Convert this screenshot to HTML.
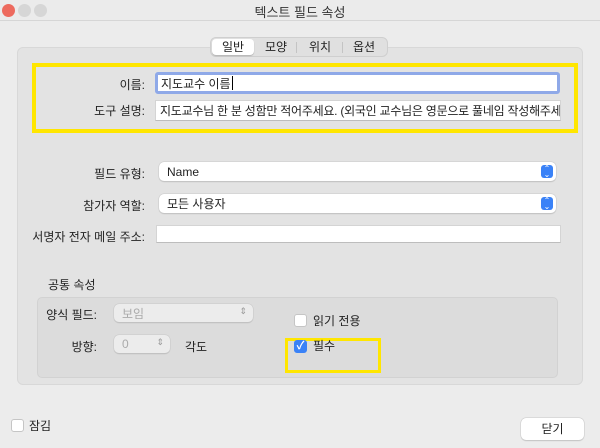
<!DOCTYPE html>
<html><head><meta charset="utf-8"><style>
*{box-sizing:border-box;margin:0;padding:0}
body{width:600px;height:448px;background:#ececec;font-family:"Liberation Sans","Noto Sans CJK KR",sans-serif;font-size:12px;color:#222;position:relative;overflow:hidden}
.a{position:absolute}
.lbl{position:absolute;text-align:right;font-size:12px;color:#222}
.field{position:absolute;background:#fff;border:1px solid #d4d4d4;border-bottom-color:#bdbdbd;font-size:12px;padding-left:4px;display:flex;align-items:center}
.pop{position:absolute;background:#fff;border-radius:5px;box-shadow:0 0 0 .5px #c8c8c8,0 1px 1px rgba(0,0,0,.2);font-size:12px;padding-left:8px;display:flex;align-items:center}
.arr{position:absolute;right:3px;top:3px;width:12px;height:13px;background:#3a82f7;border-radius:3px;color:#fff;font-size:8px;line-height:6px;text-align:center;padding-top:1px}
.cb{position:absolute;width:13px;height:13px;background:#fff;border:1px solid #c5c5c5;border-radius:3px}
</style></head><body>
<div class="a" style="left:0;top:0;width:600px;height:21px;border-bottom:1px solid #d6d6d6;background:#ebebeb"></div>
<div class="a" style="left:2px;top:4px;width:13px;height:13px;border-radius:50%;background:#ed6a5e"></div>
<div class="a" style="left:18px;top:4px;width:13px;height:13px;border-radius:50%;background:#d6d6d6"></div>
<div class="a" style="left:34px;top:4px;width:13px;height:13px;border-radius:50%;background:#d6d6d6"></div>
<div class="a" style="left:0;top:2px;width:600px;text-align:center;font-size:13px;color:#333">텍스트 필드 속성</div>

<div class="a" style="left:17px;top:47px;width:566px;height:338px;background:#e3e3e3;border:1px solid #d8d8d8;border-radius:6px"></div>
<div class="a" style="left:210px;top:37px;width:178px;height:20px;background:#e0e0e0;border:1px solid #cfcfcf;border-radius:6px"></div>
<div class="a" style="left:212px;top:39px;width:42px;height:16px;background:#fff;border-radius:4px;box-shadow:0 1px 1px rgba(0,0,0,.2)"></div>
<div class="a" style="left:212px;top:39px;width:42px;text-align:center;font-size:12px;line-height:16px">일반</div>
<div class="a" style="left:258px;top:39px;width:36px;text-align:center;font-size:12px;line-height:16px">모양</div>
<div class="a" style="left:296px;top:42px;width:1px;height:11px;background:#c4c4c4"></div>
<div class="a" style="left:300px;top:39px;width:40px;text-align:center;font-size:12px;line-height:16px">위치</div>
<div class="a" style="left:342px;top:42px;width:1px;height:11px;background:#c4c4c4"></div>
<div class="a" style="left:344px;top:39px;width:40px;text-align:center;font-size:12px;line-height:16px">옵션</div>

<div class="a" style="left:32px;top:63px;width:546px;height:70px;border:4px solid #ffe600"></div>
<div class="lbl" style="left:40px;top:76px;width:105px">이름:</div>
<div class="field" style="left:155px;top:72px;width:405px;height:22px;border:3px solid #8fa9e8;border-radius:3px;padding-left:3px">지도교수 이름<span style="display:inline-block;width:1px;height:14px;background:#000;margin-left:1px"></span></div>
<div class="lbl" style="left:40px;top:102px;width:105px">도구 설명:</div>
<div class="field" style="left:155px;top:100px;width:406px;height:21px;overflow:hidden;white-space:nowrap;letter-spacing:-0.25px">지도교수님 한 분 성함만 적어주세요. (외국인 교수님은 영문으로 풀네임 작성해주세</div>

<div class="lbl" style="left:40px;top:165px;width:105px">필드 유형:</div>
<div class="pop" style="left:159px;top:162px;width:397px;height:19px">Name<div class="arr">⌃<br>⌄</div></div>
<div class="lbl" style="left:40px;top:197px;width:105px">참가자 역할:</div>
<div class="pop" style="left:159px;top:194px;width:397px;height:19px">모든 사용자<div class="arr">⌃<br>⌄</div></div>
<div class="lbl" style="left:20px;top:228px;width:125px">서명자 전자 메일 주소:</div>
<div class="field" style="left:156px;top:225px;width:405px;height:18px"></div>

<div class="a" style="left:48px;top:276px;font-size:12px">공통 속성</div>
<div class="a" style="left:37px;top:297px;width:521px;height:81px;background:#dcdcdc;border:1px solid #d2d2d2;border-radius:5px"></div>
<div class="lbl" style="left:40px;top:306px;width:57px">양식 필드:</div>
<div class="pop" style="left:114px;top:304px;width:139px;height:18px;background:#ececec;color:#aaa">보임<span class="a" style="right:6px;top:2px;font-size:9px;color:#999">⇕</span></div>
<div class="lbl" style="left:40px;top:338px;width:57px">방향:</div>
<div class="pop" style="left:114px;top:335px;width:56px;height:18px;background:#ececec;color:#aaa">0<span class="a" style="right:6px;top:2px;font-size:9px;color:#999">⇕</span></div>
<div class="a" style="left:185px;top:338px">각도</div>
<div class="cb" style="left:294px;top:314px"></div>
<div class="a" style="left:313px;top:312px">읽기 전용</div>
<div class="a" style="left:285px;top:338px;width:96px;height:35px;border:3px solid #ffe600"></div>
<div class="cb" style="left:294px;top:340px;background:#3a82f7;border-color:#3a82f7;color:#fff;font-size:11px;line-height:11px;text-align:center;font-weight:bold">✓</div>
<div class="a" style="left:313px;top:337px">필수</div>

<div class="cb" style="left:11px;top:419px"></div>
<div class="a" style="left:29px;top:417px">잠김</div>
<div class="a" style="left:521px;top:418px;width:63px;height:22px;background:#fff;border-radius:5px;box-shadow:0 0 0 .5px #c8c8c8,0 1px 1px rgba(0,0,0,.2);text-align:center;line-height:22px">닫기</div>
</body></html>
